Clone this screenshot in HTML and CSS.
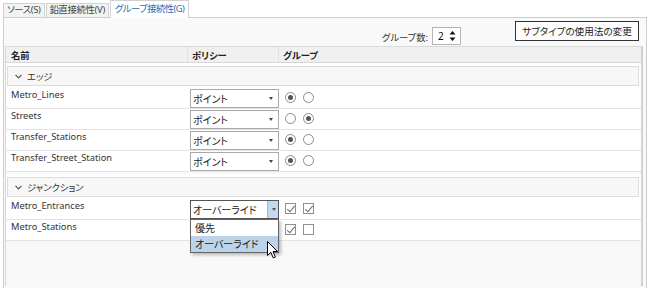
FILE: index.html
```html
<!DOCTYPE html>
<html lang="ja">
<head>
  <meta charset="UTF-8">
  <title>グループ接続性</title>
  <link rel="stylesheet" href="styles.css">
</head>
<body>

  <div class="tabs">
    <div class="tab">ソース(S)</div>
    <div class="tab">鉛直接続性(V)</div>
    <div class="tab active">グループ接続性(G)</div>
  </div>

  <div class="panel">
    <div class="toolbar">
      <span class="count-label">グループ数:</span>
      <div class="spinner">
        <span>2</span>
        <svg class="spin-arrows" width="7" height="12" viewBox="0 0 7 12">
          <path d="M3.5 1 L6.5 4.5 L0.5 4.5 Z" fill="#111"/>
          <path d="M0.5 7.5 L6.5 7.5 L3.5 11 Z" fill="#111"/>
        </svg>
      </div>
      <button class="btn">サブタイプの使用法の変更</button>
    </div>

    <div class="grid">
      <div class="grid-head">
        <div class="col col-name">名前</div>
        <div class="col col-policy">ポリシー</div>
        <div class="col col-group">グループ</div>
      </div>

      <div class="section">
        <div class="group-wrap">
          <div class="group-row">
            <svg class="chevron" width="7" height="5" viewBox="0 0 7 5"><path d="M0.5 0.8 L3.5 3.8 L6.5 0.8" fill="none" stroke="#555" stroke-width="1.2"/></svg>
            エッジ
          </div>
        </div>
        <div class="row">
          <div class="cell-name">Metro_Lines</div>
          <div class="cell-policy"><div class="combo">ポイント<span class="caret"></span></div></div>
          <div class="cell-group"><span class="radio checked"></span><span class="radio"></span></div>
        </div>
        <div class="row">
          <div class="cell-name">Streets</div>
          <div class="cell-policy"><div class="combo">ポイント<span class="caret"></span></div></div>
          <div class="cell-group"><span class="radio"></span><span class="radio checked"></span></div>
        </div>
        <div class="row">
          <div class="cell-name">Transfer_Stations</div>
          <div class="cell-policy"><div class="combo">ポイント<span class="caret"></span></div></div>
          <div class="cell-group"><span class="radio checked"></span><span class="radio"></span></div>
        </div>
        <div class="row">
          <div class="cell-name">Transfer_Street_Station</div>
          <div class="cell-policy"><div class="combo">ポイント<span class="caret"></span></div></div>
          <div class="cell-group"><span class="radio checked"></span><span class="radio"></span></div>
        </div>
      </div>

      <div class="section">
        <div class="group-wrap">
          <div class="group-row">
            <svg class="chevron" width="7" height="5" viewBox="0 0 7 5"><path d="M0.5 0.8 L3.5 3.8 L6.5 0.8" fill="none" stroke="#555" stroke-width="1.2"/></svg>
            ジャンクション
          </div>
        </div>
        <div class="row">
          <div class="cell-name">Metro_Entrances</div>
          <div class="cell-policy">
            <div class="combo open">オーバーライド<span class="drop-btn"><span class="caret"></span></span>
              <div class="popup">
                <div class="option">優先</div>
                <div class="option selected">オーバーライド</div>
                <svg class="cursor" width="12" height="19" viewBox="0 0 12 19">
                  <path d="M0.5 0.5 L0.5 14.5 L3.8 11.3 L6.3 17 L8.4 16 L6 10.5 L10.5 10.5 Z" fill="#fff" stroke="#000" stroke-width="1" stroke-linejoin="round"/>
                </svg>
              </div>
            </div>
          </div>
          <div class="cell-group"><span class="check on"></span><span class="check on"></span></div>
        </div>
        <div class="row">
          <div class="cell-name">Metro_Stations</div>
          <div class="cell-policy"></div>
          <div class="cell-group"><span class="check on"></span><span class="check"></span></div>
        </div>
      </div>

      <div class="grid-fill"></div>
    </div>
  </div>

</body>
</html>
```

FILE: styles.css
```css
* {
  box-sizing: border-box;
}

body {
  margin: 0;
  background: #fff;
  font-family: "Noto Sans", "Noto Sans CJK JP", sans-serif;
  font-size: 9.3px;
  font-feature-settings: "palt";
  color: #333;
  height: 288px;
  overflow: hidden;
}

/* Tabs */
.tabs {
  display: flex;
  align-items: flex-end;
  height: 17px;
  padding-left: 3px;
}

.tab {
  height: 14px;
  line-height: 12px;
  padding: 0 3px;
  margin-right: 1px;
  border: 1px solid #d2d2d2;
  border-bottom: none;
  background: #f3f3f3;
  color: #444;
  letter-spacing: -0.3px;
  white-space: nowrap;
}

.tab.active {
  height: 18px;
  line-height: 15px;
  margin-bottom: -1px;
  margin-right: 0;
  padding: 0 4px;
  background: #fff;
  color: #2b6cb3;
  letter-spacing: -0.5px;
  position: relative;
}

/* Panel */
.panel {
  margin: 0 3px 0 3px;
  border: 1px solid #cdcdcd;
  background: #f9f9f9;
  height: 280px;
}

.toolbar {
  display: flex;
  justify-content: flex-end;
  align-items: flex-start;
  height: 28px;
  padding: 3px 7px 0 0;
}

.count-label {
  margin-top: 9px;
  margin-right: 4px;
  color: #333;
}

.spinner {
  display: flex;
  align-items: center;
  justify-content: space-between;
  margin-top: 6px;
  width: 29px;
  height: 18px;
  padding: 0 4px 0 5px;
  border: 1px solid #b4b4b4;
  background: #fff;
  color: #111;
  font-size: 10px;
}

.btn {
  margin-left: 54px;
  width: 124px;
  height: 20px;
  padding: 0;
  border: 1px solid #333;
  background: #fdfdfd;
  font-family: inherit;
  font-size: 9.6px;
  font-feature-settings: "palt";
  color: #222;
}

/* Grid */
.grid {
  margin-left: 1px;
  width: 638px;
  border-left: 1px solid #d6d6d6;
  border-right: 2px solid #d2d2d2;
  background: #f8f8f8;
  height: 240px;
}

.grid-head {
  display: flex;
  height: 17px;
  border-top: 1px solid #dadada;
  border-bottom: 1px solid #d6d6d6;
  background: #f0f0f0;
  font-weight: 700;
  color: #222;
}

.col {
  padding: 1px 0 0 5px;
  border-right: 1px solid #e2e2e2;
}

.col-name { width: 182px; }
.col-policy { width: 91px; padding-left: 4px; }
.col-group { flex: 1; border-right: none; padding-left: 4px; }

.section + .section {
  margin-top: 2px;
}

.group-wrap {
  background: #fff;
  padding: 3px 2px 2px 1px;
}

.group-row {
  display: flex;
  align-items: center;
  height: 20px;
  padding-left: 7px;
  border: 1px solid #dcdcdc;
  background: #f7f7f7;
  color: #333;
}

.chevron {
  margin-right: 5px;
}

.row {
  display: flex;
  height: 21px;
  background: #fff;
  border-bottom: 1px solid #e4e4e4;
}

.cell-name {
  width: 182px;
  padding: 0 0 0 5px;
  color: #333;
}

.cell-policy {
  width: 91px;
  padding: 1px 0 0 2px;
}

.cell-group {
  display: flex;
  align-items: center;
  gap: 7px;
  padding: 0 0 1px 6px;
}

/* Combo box */
.combo {
  position: relative;
  display: flex;
  align-items: center;
  width: 89px;
  height: 19px;
  padding-left: 2px;
  border: 1px solid #a9a9a9;
  background: #fff;
  color: #222;
  font-size: 10px;
}

.caret {
  position: absolute;
  right: 5px;
  top: 7px;
  width: 0;
  height: 0;
  border-left: 2.5px solid transparent;
  border-right: 2.5px solid transparent;
  border-top: 3px solid #444;
}

.combo.open {
  border-color: #555;
}

.drop-btn {
  position: absolute;
  right: 0;
  top: 0;
  width: 11px;
  height: 17px;
  background: #c3d9ed;
  border-left: 1px solid #9fb9d1;
}

.drop-btn .caret {
  right: 2.5px;
  top: 7px;
  border-top-color: #555;
}

.popup {
  position: absolute;
  left: -1px;
  top: 18px;
  width: 89px;
  height: 34px;
  border: 1px solid #646464;
  background: #fff;
  box-shadow: 2px 2px 3px rgba(0, 0, 0, 0.25);
  z-index: 2;
}

.option {
  height: 16px;
  line-height: 16px;
  padding-left: 4px;
  color: #222;
}

.option.selected {
  background: #bcd4ea;
}

.cursor {
  position: absolute;
  left: 76px;
  top: 21px;
}

/* Radios and checks */
.radio {
  width: 11px;
  height: 11px;
  border: 1px solid #8a8a8a;
  border-radius: 50%;
  background: #fff;
  position: relative;
}

.radio.checked::after {
  content: "";
  position: absolute;
  left: 2px;
  top: 2px;
  width: 5px;
  height: 5px;
  border-radius: 50%;
  background: #555;
}

.check {
  width: 11px;
  height: 11px;
  border: 1px solid #8f8f8f;
  background: #fff;
  position: relative;
}

.check.on::after {
  content: "";
  position: absolute;
  left: 3px;
  top: 0px;
  width: 3px;
  height: 7px;
  border-right: 1px solid #666;
  border-bottom: 1px solid #666;
  transform: rotate(40deg);
}

.grid-fill {
  height: 60px;
}
```
